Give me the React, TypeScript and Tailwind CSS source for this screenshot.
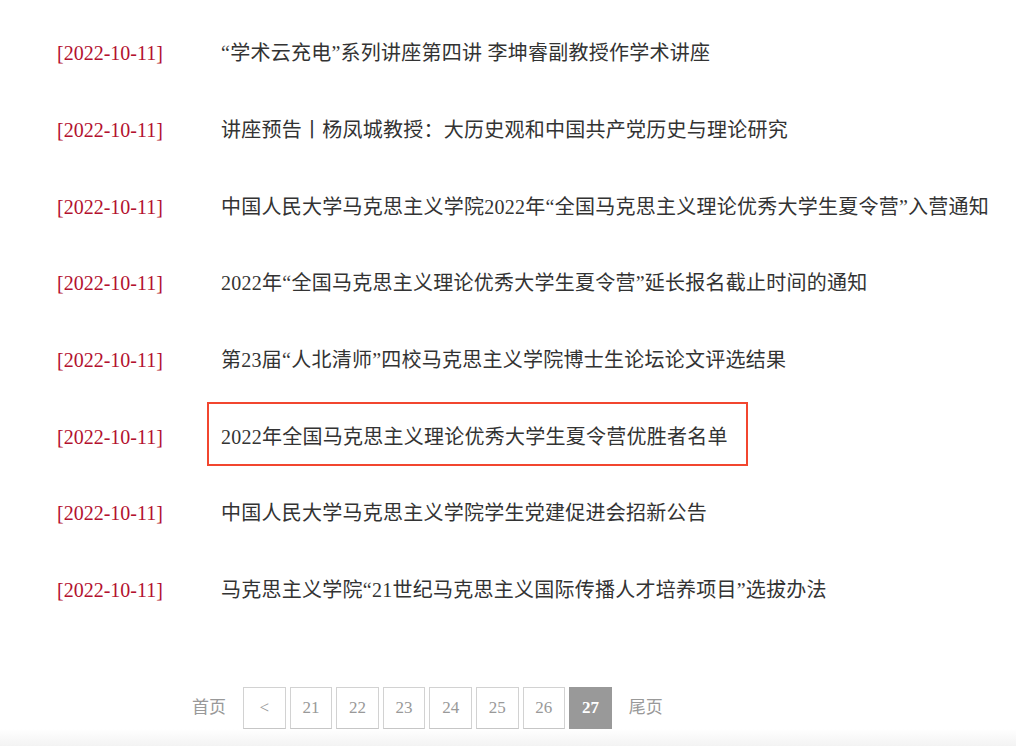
import React from 'react';

const news = [
  '“学术云充电”系列讲座第四讲 李坤睿副教授作学术讲座',
  '讲座预告丨杨凤城教授：大历史观和中国共产党历史与理论研究',
  '中国人民大学马克思主义学院2022年“全国马克思主义理论优秀大学生夏令营”入营通知',
  '2022年“全国马克思主义理论优秀大学生夏令营”延长报名截止时间的通知',
  '第23届“人北清师”四校马克思主义学院博士生论坛论文评选结果',
  '2022年全国马克思主义理论优秀大学生夏令营优胜者名单',
  '中国人民大学马克思主义学院学生党建促进会招新公告',
  '马克思主义学院“21世纪马克思主义国际传播人才培养项目”选拔办法',
];

const pages = ['<', '21', '22', '23', '24', '25', '26', '27'];

const font = { fontFamily: '"Liberation Serif", "Noto Sans CJK SC", serif' };

export default function App() {
  return (
    <div className="w-[1016px] h-[746px] overflow-hidden bg-white flex flex-col" style={font}>
      <ul className="pt-[15px] pl-[57px]">
        {news.map((title, i) => (
          <li key={i} className="h-[76.7px] flex items-center text-[20px]">
            <span className="w-[164px] shrink-0 text-[#b3112f]">[2022-10-11]</span>
            <span className="relative text-[#333] whitespace-nowrap tracking-[0.25px]">
              {title}
              {/* highlight box around the chosen item */}
              {i === 5 && (
                <span className="absolute left-[-14px] top-[-20px] w-[541px] h-[64px] border-2 border-[#f2462f] pointer-events-none" />
              )}
            </span>
          </li>
        ))}
      </ul>

      <div className="mt-[58px] pl-[192px] flex items-center text-[17px] text-[#999]">
        <span className="mr-[17px]">首页</span>
        <div className="flex gap-[4px]">
          {pages.map((p) => (
            <span
              key={p}
              className={`w-[42.6px] h-[42px] flex items-center justify-center border ${
                p === '27'
                  ? 'bg-[#999] border-[#999] text-white font-bold'
                  : 'border-[#d2d2d2] border-b-[#c6c6c6] bg-white'
              }`}
            >
              {p}
            </span>
          ))}
        </div>
        <span className="ml-[17px]">尾页</span>
      </div>

      <div className="flex-1 bg-gradient-to-b from-white to-[#f3f3f3]" />
    </div>
  );
}
